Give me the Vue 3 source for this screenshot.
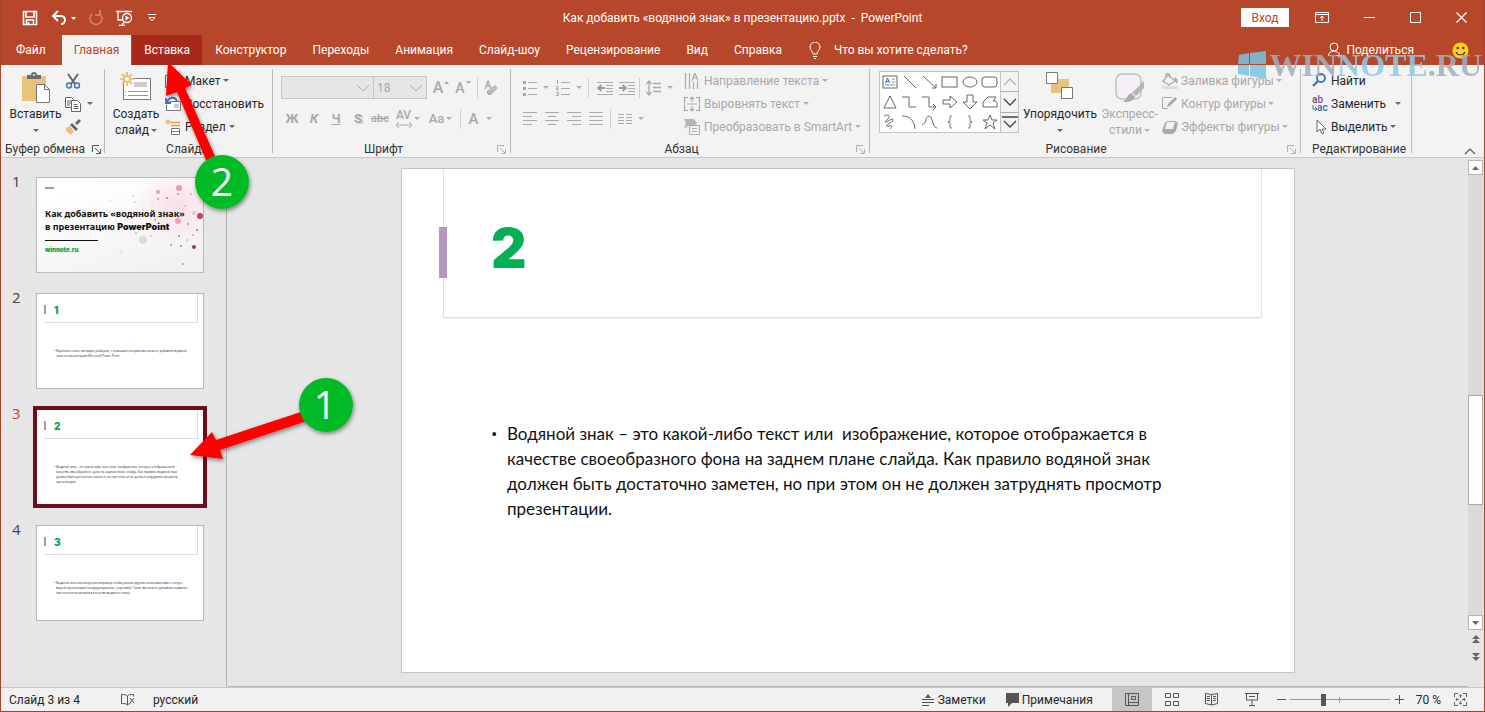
<script setup>
import { ref } from 'vue'

const tabs = ['Файл', 'Главная', 'Вставка', 'Конструктор', 'Переходы', 'Анимация', 'Слайд-шоу', 'Рецензирование', 'Вид', 'Справка']
const activeTab = ref('Главная')
const zoom = ref(33)

const slideText = [
  'Водяной знак – это какой-либо текст или \u00a0изображение, которое отображается в',
  'качестве своеобразного фона на заднем плане слайда. Как правило водяной знак',
  'должен быть достаточно заметен, но при этом он не должен затруднять просмотр',
  'презентации.'
]

const slides = [
  { n: 2, title: '1', lines: ['В данной статье наглядно разберём, с помощью которых вы сможете добавить водяной', 'знак на презентацию Microsoft Power Point'] },
  { n: 3, title: '2', lines: slideText, current: true },
  { n: 4, title: '3', lines: ['Водяной знак используется например чтобы указать другим пользователям о статусе', 'вашей презентации (конфиденциально, черновик). Также вы можете добавить название', 'или логотип компании в качестве водяного знака.'] }
]

const dots = [
  [142, 10, 3, '#e79bb5'], [121, 14, 2, '#e0a3b8'], [141, 16, 1, '#c77f98'], [154, 16, 1, '#d9a9b8'], [96, 18, 1, '#ddd0d4'],
  [121, 21, 1, '#c9889c'], [130, 20, 1, '#c77f98'], [98, 24, 1, '#ddd0d4'], [115, 25, 1, '#ddd0d4'], [148, 28, 1, '#ddbcc6'],
  [157, 35, 2, '#e3c3cd'], [163, 38, 3, '#b0476b'], [141, 43, 3, '#ee9fba'], [151, 46, 1, '#b98495'], [118, 42, 1, '#cf8fa3'],
  [160, 52, 1, '#a9687c'], [99, 55, 1, '#d8b4bf'], [114, 58, 1, '#e0c4cc'], [142, 58, 1, '#b77b8d'], [156, 57, 1, '#d5a4b2'],
  [106, 62, 4, '#ecd3d9'], [134, 67, 1, '#b58390'], [144, 68, 1, '#b58390'], [157, 69, 2, '#7f4356'], [84, 74, 2, '#f0e2e5'],
  [146, 86, 1, '#b9a0a7'], [73, 23, 1, '#eadfe2'], [70, 86, 1, '#eadfe2'], [127, 34, 1, '#d8b4bf'], [150, 62, 1, '#e0b4c2']
]

const shapes = [
  '<rect x="3" y="4" width="14" height="12"/><path d="M12 7h3M12 10h3M5 13h10" stroke="#8a8f98"/><path d="M5.500 11l2-5 2 5M6.500 9.500h2" stroke="#2b63a8"/>',
  '<path d="M4 4l12 12"/>',
  '<path d="M3 4l13 12M16 12v4h-4"/>',
  '<rect x="2" y="5" width="15" height="10"/>',
  '<ellipse cx="10" cy="10" rx="7" ry="5"/>',
  '<rect x="2" y="5" width="15" height="10" rx="3"/>',
  '<path d="M10 4l6 12H4z"/>',
  '<path d="M2 5h7v10h7"/>',
  '<path d="M2 5h7v10h7M13 12l3 3-3 3"/>',
  '<path d="M3 8h7V4l7 6-7 6v-4H3z"/>',
  '<path d="M7 3h6v7h4l-7 7-7-7h4z"/>',
  '<path d="M3 15V10l5-5h8l-3 4h2q3 0 2 6z"/>',
  '<path d="M4 4c5-3 7 1 3 4s-1 3 3 0 4 1 0 3-5 4-1 3 3 1 1 3"/>',
  '<path d="M2 4c8 0 12 4 13 13"/>',
  '<path d="M2 13c5-1 3-9 7-9s3 12 8 12"/>',
  '<path d="M12 4c-3 0-2 1-2 3s0 3-2 3c2 0 2 1 2 3s-1 3 2 3"/>',
  '<path d="M8 4c3 0 2 1 2 3s0 3 2 3c-2 0-2 1-2 3s1 3-2 3"/>',
  '<path d="M10 3l2 5h5l-4 3 2 6-5-4-5 4 2-6-4-3h5z"/>'
]

const aligns = [
  'M1 2h14M1 6h9M1 10h14M1 14h9',
  'M1 2h14M4 6h8M1 10h14M4 14h8',
  'M1 2h14M6 6h9M1 10h14M6 14h9',
  'M1 2h14M1 6h14M1 10h14M1 14h14'
]
</script>

<template>
  <div class="window">
    <header class="titlebar">
      <div class="quick">
        <button aria-label="Сохранить"><svg width="16" height="16" viewBox="0 0 16 16"><path d="M1.500 1.500h13v13h-13zM4 2v5h8V2M4.500 14v-4h7v4M6.500 12v2" fill="none" stroke="#fff" stroke-width="1.600" /></svg></button>
        <button aria-label="Отменить"><svg width="26" height="16" viewBox="0 0 26 16"><path d="M2 6h7c7 0 6 8 1 8M7 1L2 6l5 5" fill="none" stroke="#fff" stroke-width="2" /><path d="M20 7h5l-2.500 3z" fill="#fff" /></svg></button>
        <button aria-label="Повторить"><svg width="16" height="16" viewBox="0 0 16 16"><path d="M12 4a6 6 0 1 1-8 0M4 0v5H9" fill="none" stroke="#cd7c66" stroke-width="2" transform="translate(16 0) scale(-1 1)" /></svg></button>
        <button aria-label="Начать показ"><svg width="18" height="16" viewBox="0 0 18 16"><path d="M1 1.500h16M3 2v8h5M7 15l2-3M4 15.500h6" fill="none" stroke="#fff" stroke-width="1.300" /><circle cx="12" cy="8" r="4.500" fill="none" stroke="#fff" stroke-width="1.300" /><path d="M10.500 5.500v5l4-2.500z" fill="#fff" /></svg></button>
        <button aria-label="Настройка панели"><svg width="8" height="8" viewBox="0 0 8 8"><path d="M0 .5h8M1 3.500h6L4 7z" fill="none" stroke="#fff" /></svg></button>
      </div>
      <h1 class="doc">Как добавить «водяной знак» в презентацию.pptx&nbsp; -&nbsp; PowerPoint</h1>
      <div class="sys">
        <button class="login">Вход</button>
        <button aria-label="Параметры ленты"><svg width="14" height="12" viewBox="0 0 14 12"><path d="M.5.500h13v10H.5zM.5 2.500h13M7 9V4M5 6l2-2 2 2" fill="none" stroke="#fff" /></svg></button>
        <button aria-label="Свернуть"><svg width="11" height="11" viewBox="0 0 11 11"><path d="M0 5.500h11" stroke="#fff" /></svg></button>
        <button aria-label="Развернуть"><svg width="11" height="11" viewBox="0 0 11 11"><path d="M.5.500h10v10H.5z" fill="none" stroke="#fff" /></svg></button>
        <button aria-label="Закрыть"><svg width="11" height="11" viewBox="0 0 11 11"><path d="M.5.500l10 10M10.500.500l-10 10" stroke="#fff" stroke-width="1.200" /></svg></button>
      </div>
    </header>

    <nav class="tabs">
      <button v-for="t in tabs" :key="t" :class="{ active: t === activeTab, hover: t === 'Вставка' }" @click="activeTab = t">{{ t }}</button>
      <label class="tell">
        <svg width="12" height="17" viewBox="0 0 12 17"><path d="M4 12c0-3-3-3.500-3-7a5 5 0 0 1 10 0c0 3.500-3 4-3 7zM4 14.500h4M5 16.500h2" fill="none" stroke="#fff" /></svg>
        <input type="text" placeholder="Что вы хотите сделать?" aria-label="Что вы хотите сделать?">
      </label>
      <button class="share"><svg width="14" height="16" viewBox="0 0 14 16"><circle cx="6" cy="5" r="4" fill="none" stroke="#fff" /><path d="M.5 14c0-3 2-5 5.500-5 2 0 3 1 4 2M8 13.500h6M11 10.500v5" fill="none" stroke="#fff" /></svg>Поделиться</button>
      <button class="smile" aria-label="Отзыв"><svg width="17" height="17" viewBox="0 0 17 17"><circle cx="8.500" cy="8.500" r="8" fill="#fdd017" /><circle cx="5.700" cy="6" r="1.200" fill="#333" /><circle cx="11.300" cy="6" r="1.200" fill="#333" /><path d="M4 10c2 4 7 4 9 0" fill="none" stroke="#333" stroke-width="1.200" /></svg></button>
    </nav>

    <section class="ribbon">
      <div class="group g-clip">
        <div class="body">
          <button class="big">
            <svg width="30" height="32" viewBox="0 0 30 32"><path d="M1 4h24v25H1z" fill="#e9c27c" /><path d="M6 7V3h4a3 3 0 0 1 6 0h4v4z" fill="#6b6b6b" /><circle cx="13" cy="3" r="1" fill="#f3f3f3" /><path d="M15.500 12.500h8l5 5v13h-13z" fill="#fff" stroke="#777" /><path d="M23.500 12.500v5h5" fill="none" stroke="#777" /></svg>
            <span>Вставить</span><i class="caret"></i>
          </button>
          <div class="col">
            <button aria-label="Вырезать"><svg width="16" height="16" viewBox="0 0 16 16"><path d="M3 1l7 10M13 1L6 11" stroke="#666" stroke-width="2" /><circle cx="4" cy="12.500" r="2.500" fill="none" stroke="#3b73b9" stroke-width="1.400" /><circle cx="12" cy="12.500" r="2.500" fill="none" stroke="#3b73b9" stroke-width="1.400" /></svg></button>
            <button aria-label="Копировать"><svg width="16" height="16" viewBox="0 0 16 16" fill="#fff" stroke="#666"><path d="M.5 1.500h6l2 2v8h-8zM2 5h4M2 7h4M2 9h3" /><path d="M6.500 4.500h6l3 3v8h-9zM8.500 8.500h4M8.500 10.500h5M8.500 12.500h5" /></svg><i class="caret wide"></i></button>
            <button aria-label="Формат по образцу"><svg width="16" height="16" viewBox="0 0 16 16"><path d="M1 9l4-2 4 5-3 4-5-4z" fill="#e9c27c" /><path d="M5 6l2-2 6 6-2 2zM10 4l4-4 2 2-4 4z" fill="#666" /></svg></button>
          </div>
        </div>
        <footer><span>Буфер обмена</span><button class="launch dark" aria-label="Параметры: Буфер обмена"><svg width="9" height="9" viewBox="0 0 9 9"><path d="M.5 7V.5H7M3 3l5 5M8.500 4v4.500H4" /></svg></button></footer>
      </div>

      <div class="group g-slides">
        <div class="body">
          <button class="big">
            <svg width="32" height="32" viewBox="0 0 32 32"><path d="M3.500 6.500h27v21h-27z" fill="#fff" stroke="#777" /><path d="M14 10h13v5H14z" fill="#ccc" /><path d="M8 19.500h20M8 23.500h20M5 19.500h1M5 23.500h1" stroke="#999" /><path d="M7 0v14M0 7h14M2 2l10 10M12 2L2 12" stroke="#e9c27c" stroke-width="2" /><circle cx="7" cy="7" r="3" fill="#fff" stroke="#e9c27c" stroke-width="2" /></svg>
            <span>Создать</span><span>слайд<i class="caret"></i></span>
          </button>
          <div class="col">
            <button><svg width="16" height="16" viewBox="0 0 16 16" fill="#fff" stroke="#666"><path d="M.5 2.500h15v12H.5zM3 5.500h10M3 8.500h4v4H3zM9 8.500h4v4H9z" /></svg>Макет<i class="caret"></i></button>
            <button><svg width="16" height="16" viewBox="0 0 16 16"><path d="M4.500 5.500h11v9H1.500v-6" fill="#fff" stroke="#777" /><path d="M9 8h5v4H9z" fill="#ccc" /><path d="M2 7c1-6 8-7 10-2M1 2v5h5" fill="none" stroke="#3b73b9" stroke-width="1.800" /></svg>Восстановить</button>
            <button><svg width="16" height="16" viewBox="0 0 16 16"><path d="M3 0v6M0 3h6M1 1l4 4M5 1L1 5" stroke="#e9b060" /><path d="M6 3.500h9M6 6.500h9" stroke="#df9a47" stroke-width="1.500" /><path d="M6.500 9.500h8v6h-8zM6.500 12.500h8" fill="#fff" stroke="#777" /></svg>Раздел<i class="caret"></i></button>
          </div>
        </div>
        <footer><span>Слайды</span></footer>
      </div>

      <div class="group g-font muted">
        <div class="body rows">
          <div class="row">
            <div class="combo face"><select aria-label="Шрифт"><option></option></select><svg width="14" height="8" viewBox="0 0 14 8"><path d="M1 1l6 6 6-6" /></svg></div>
            <div class="combo size"><select aria-label="Размер шрифта"><option>18</option></select><svg width="14" height="8" viewBox="0 0 14 8"><path d="M1 1l6 6 6-6" /></svg></div>
            <button class="tool grow" aria-label="Увеличить шрифт">A<svg width="5" height="3" viewBox="0 0 5 3"><path d="M0 3h5L2.500 0z" fill="#aaa" /></svg></button>
            <button class="tool shrink" aria-label="Уменьшить шрифт">A<svg width="5" height="3" viewBox="0 0 5 3"><path d="M0 0h5L2.500 3z" fill="#aaa" /></svg></button>
            <i class="sep"></i>
            <button class="tool" aria-label="Очистить формат"><svg width="16" height="16" viewBox="0 0 16 16"><path d="M1 9l3-8 3 8M2 6h4" fill="none" stroke="#aaa" stroke-width="1.400" /><path d="M11 5l3 3-7 7-4-4z" fill="#bbb" /><path d="M3 11l4 4H5l-2-2z" fill="#999" /></svg></button>
          </div>
          <div class="row low">
            <button class="tool"><b>Ж</b></button>
            <button class="tool"><b class="it">К</b></button>
            <button class="tool"><b class="un">Ч</b></button>
            <button class="tool"><b class="sh">S</b></button>
            <button class="tool abc"><s>abc</s></button>
            <button class="tool wide av"><span>AV<svg width="16" height="6" viewBox="0 0 16 6"><path d="M1 3h14M3 0L0 3l3 3M13 0l3 3-3 3" fill="none" stroke="#aaa" /></svg></span><i class="caret"></i></button>
            <button class="tool wide"><b class="md">Aa</b><i class="caret"></i></button>
            <i class="sep"></i>
            <button class="tool wide"><b class="lg">A</b><i class="caret color"></i></button>
          </div>
        </div>
        <footer><span>Шрифт</span><button class="launch" aria-label="Параметры: Шрифт"><svg width="9" height="9" viewBox="0 0 9 9"><path d="M.5 7V.5H7M3 3l5 5M8.500 4v4.500H4" /></svg></button></footer>
      </div>

      <div class="group g-para muted">
        <div class="body">
          <div class="rows">
            <div class="row">
              <button class="tool pair" aria-label="Маркеры"><svg width="16" height="16" viewBox="0 0 16 16"><path d="M6 2.500h9M6 8.500h9M6 14.500h9" stroke="#aaa" /><path d="M1 1h3v3H1zM1 7h3v3H1zM1 13h3v3H1z" fill="#aaa" /></svg><i class="caret"></i></button>
              <button class="tool pair" aria-label="Нумерация"><svg width="16" height="16" viewBox="0 0 16 16"><path d="M6 2.500h9M6 8.500h9M6 14.500h9M2.500 0v4M1 6.500h2v2H1.500v1.500H4M1 12.500h2.500v3H1M2 14h1" stroke="#aaa" fill="none" /></svg><i class="caret"></i></button>
              <i class="sep"></i>
              <button class="tool ind" aria-label="Уменьшить отступ"><svg width="16" height="16" viewBox="0 0 16 16"><path d="M0 2.500h16M9 5.500h7M9 8.500h7M9 11.500h7M0 14.500h16" stroke="#aaa" /><path d="M8 8H2M4.500 5L1 8l3.500 3" fill="none" stroke="#999" stroke-width="1.800" /></svg></button>
              <button class="tool ind" aria-label="Увеличить отступ"><svg width="16" height="16" viewBox="0 0 16 16"><path d="M0 2.500h16M9 5.500h7M9 8.500h7M9 11.500h7M0 14.500h16" stroke="#aaa" /><path d="M0 8h6M3.500 5L7 8l-3.500 3" fill="none" stroke="#999" stroke-width="1.800" /></svg></button>
              <i class="sep"></i>
              <button class="tool pair" aria-label="Интервал"><svg width="16" height="16" viewBox="0 0 16 16"><path d="M7 3.500h8M7 7.500h8M7 11.500h8M3 1v14M.5 4L3 1l2.500 3M.5 12L3 15l2.500-3" fill="none" stroke="#aaa" stroke-width="1.300" /></svg><i class="caret"></i></button>
            </div>
            <div class="row low">
              <button v-for="(a, i) in aligns" :key="i" class="tool" :aria-label="'Выравнивание ' + (i + 1)"><svg width="16" height="16" viewBox="0 0 16 16"><path :d="a" transform="translate(0 -.5)" stroke="#aaa" fill="none" /></svg></button>
              <i class="sep"></i>
              <button class="tool pair" aria-label="Колонки"><svg width="16" height="16" viewBox="0 0 16 16"><path d="M1 3.500h6M1 6.500h6M1 9.500h6M1 12.500h6M9 3.500h6M9 6.500h6M9 9.500h6M9 12.500h6" stroke="#aaa" /></svg><i class="caret"></i></button>
            </div>
          </div>
          <div class="col">
            <button><svg width="16" height="16" viewBox="0 0 16 16"><path d="M1.500 0v16M5.500 0v16M9.500 9v7M13.500 9v7M8 8l3-8 3 8M9 5h4" fill="none" stroke="#aaa" stroke-width="1.200" /></svg>Направление текста<i class="caret"></i></button>
            <button><svg width="16" height="16" viewBox="0 0 16 16"><path d="M4 1.500H.5v13H4M12 1.500h3.500v13H12M3 8h10M8 1v5M6 3l2-2 2 2M8 10v5M6 13l2 2 2-2" fill="none" stroke="#aaa" stroke-width="1.200" /></svg>Выровнять текст<i class="caret"></i></button>
            <button><svg width="16" height="16" viewBox="0 0 16 16"><path d="M0 0h10l3 4-3 3-6 0-4 3 2-6z" fill="#b5b5b5" /><path d="M5.500 6.500h10v9h-10zM8 9.500h5M8 12.500h5" fill="#f3f3f3" stroke="#aaa" /></svg>Преобразовать в SmartArt<i class="caret"></i></button>
          </div>
        </div>
        <footer><span>Абзац</span><button class="launch" aria-label="Параметры: Абзац"><svg width="9" height="9" viewBox="0 0 9 9"><path d="M.5 7V.5H7M3 3l5 5M8.500 4v4.500H4" /></svg></button></footer>
      </div>

      <div class="group g-draw">
        <div class="body">
          <div class="gallery">
            <div class="shapes">
              <button v-for="(s, i) in shapes" :key="i" :aria-label="'Фигура ' + (i + 1)"><svg width="20" height="20" viewBox="0 0 20 20" v-html="s"></svg></button>
            </div>
            <div class="spin">
              <button class="off" aria-label="Вверх"><svg width="14" height="8" viewBox="0 0 14 8"><path d="M1 7l6-6 6 6" /></svg></button>
              <button aria-label="Вниз"><svg width="14" height="8" viewBox="0 0 14 8"><path d="M1 1l6 6 6-6" /></svg></button>
              <button aria-label="Ещё"><svg width="16" height="12" viewBox="0 0 16 12"><path d="M0 1h16M2 5l6 6 6-6" /></svg></button>
            </div>
          </div>
          <button class="big arrange">
            <svg width="28" height="32" viewBox="0 0 28 32"><path d="M5 7h18v14H5z" fill="#e9c27c" /><path d="M.5.500h11v11H.5zM15.500 15.500h11v11h-11z" fill="#fff" stroke="#777" /></svg>
            <span>Упорядочить</span><i class="caret"></i>
          </button>
          <button class="big muted styles">
            <svg width="30" height="32" viewBox="0 0 30 32"><rect x="1" y="2" width="25" height="25" rx="6" fill="#f4f0f5" stroke="#c2bfc5" stroke-width="1.500" /><path d="M29 9v7l-8 8-4-3z" fill="#b5b5b5" /><path d="M16 21l4 4c-2 5-8 5-12 5 4-2 4-7 8-9z" fill="#aaa" /></svg>
            <span>Экспресс-</span><span>стили<i class="caret"></i></span>
          </button>
          <div class="col muted">
            <button><svg width="16" height="16" viewBox="0 0 16 16"><path d="M6 2l7 6-6 4-6-4zM4 4c-1-5 5-5 4 1" fill="none" stroke="#aaa" stroke-width="1.200" /><path d="M13 4c3 2 3 4 2 7l-3-4z" fill="#aaa" /><path d="M0 13h16v3H0z" fill="#ddd" /></svg>Заливка фигуры<i class="caret"></i></button>
            <button><svg width="16" height="16" viewBox="0 0 16 16"><path d="M10 1.500H.5v11h5" fill="none" stroke="#aaa" /><path d="M5 11l1-3 7-7 2 2-7 7z" fill="#aaa" /></svg>Контур фигуры<i class="caret"></i></button>
            <button><svg width="16" height="16" viewBox="0 0 16 16"><path d="M5 2h8l3 2-2 8-3 3H2l-2-3L3 4z" fill="#aaa" /><path d="M5 3h8l-2 7H3z" fill="#f3f3f3" /></svg>Эффекты фигуры<i class="caret"></i></button>
          </div>
        </div>
        <footer><span>Рисование</span><button class="launch" aria-label="Параметры: Рисование"><svg width="9" height="9" viewBox="0 0 9 9"><path d="M.5 7V.5H7M3 3l5 5M8.500 4v4.500H4" /></svg></button></footer>
      </div>

      <div class="group g-edit">
        <div class="body">
          <div class="col">
            <button><svg width="16" height="16" viewBox="0 0 16 16"><circle cx="9" cy="5" r="4" fill="none" stroke="#3b73b9" stroke-width="1.800" /><path d="M6 8l-5 5" stroke="#3b73b9" stroke-width="2.400" /></svg>Найти</button>
            <button><span class="replace" aria-hidden="true"><em>a<u>b</u></em><em class="ac"><svg width="5" height="6" viewBox="0 0 5 6"><path d="M1 0v4h4M3 2l2 2-2 2" fill="none" stroke="#3b73b9" /></svg>ac</em></span>Заменить<i class="caret far"></i></button>
            <button><svg width="16" height="16" viewBox="0 0 16 16"><path d="M5 1v12l3-3 2 5 2-1-2-4h4z" fill="#fff" stroke="#666" /></svg>Выделить<i class="caret"></i></button>
          </div>
        </div>
        <footer><span>Редактирование</span></footer>
      </div>
      <button class="collapse" aria-label="Свернуть ленту"><svg width="12" height="7" viewBox="0 0 12 7"><path d="M1 6l5-5 5 5" fill="none" stroke="#555" stroke-width="1.200" /></svg></button>
    </section>

    <main class="work">
      <aside class="thumbs">
        <div class="item">
          <span class="num">1</span>
          <div class="thumb cover">
            <svg viewBox="0 0 166 94"><defs><radialGradient id="haze"><stop offset="0" stop-color="#f9dfe8" /><stop offset="1" stop-color="#f9dfe8" stop-opacity="0" /></radialGradient><linearGradient id="mist" x1="0.400" y1="0" x2="1" y2="1"><stop offset="0" stop-color="#fff" /><stop offset="1" stop-color="#f1eff0" /></linearGradient></defs><rect width="166" height="94" fill="url(#mist)" /><ellipse cx="142" cy="28" rx="46" ry="38" fill="url(#haze)" /><circle v-for="(d, i) in dots" :key="i" :cx="d[0]" :cy="d[1]" :r="d[2]" :fill="d[3]" /></svg>
            <div class="cover-text"><i class="dash"></i><h2>Как добавить «водяной знак»<br>в презентацию <b>PowerPoint</b></h2><hr><p>winnote.ru</p></div>
          </div>
        </div>
        <div v-for="s in slides" :key="s.n" class="item" :class="{ current: s.current }">
          <span class="num">{{ s.n }}</span>
          <div class="thumb">
            <div class="t-head"><i></i><b>{{ s.title }}</b></div>
            <div class="t-body"><span>•</span><p><template v-for="l in s.lines" :key="l">{{ l }}<br></template></p></div>
          </div>
        </div>
      </aside>

      <section class="canvas">
        <article class="slide">
          <div class="s-head"><i></i><h2>2</h2></div>
          <ul><li><template v-for="l in slideText" :key="l">{{ l }}<br></template></li></ul>
        </article>
      </section>

      <div class="scroll">
        <button class="sb" aria-label="Прокрутить вверх"><svg width="7" height="4" viewBox="0 0 7 4"><path d="M0 4h7L3.500 0z" /></svg></button>
        <div class="track"><div class="knob"></div></div>
        <button class="sb" aria-label="Прокрутить вниз"><svg width="7" height="4" viewBox="0 0 7 4"><path d="M0 0h7L3.500 4z" /></svg></button>
        <button class="jump" aria-label="Предыдущий слайд"><svg width="8" height="9" viewBox="0 0 8 9"><path d="M0 4h8L4 0zM0 8h8L4 4z" /></svg></button>
        <button class="jump" aria-label="Следующий слайд"><svg width="8" height="9" viewBox="0 0 8 9"><path d="M0 0h8L4 4zM0 4h8L4 8z" /></svg></button>
      </div>
    </main>

    <footer class="status">
      <span class="count">Слайд 3 из 4</span>
      <button class="spell" aria-label="Орфография"><svg width="14" height="13" viewBox="0 0 14 13"><path d="M6.500 12V3C5 1.500 3 1.500.5 1.500v9c3 0 4.500 0 6 1.500 1-1 2-1.500 3-1.500M6.500 3c1-1.500 3-1.500 6-1.500v2M9 5l4 5M13 5l-4 5" fill="none" stroke="#555" /></svg></button>
      <button class="lang">русский</button>
      <button class="notes"><svg width="12" height="12" viewBox="0 0 12 12"><path d="M0 5.500h12M0 8.500h12M0 11.500h7" stroke="#555" /><path d="M3 4h6L6 0z" fill="#555" /></svg>Заметки</button>
      <button class="comments"><svg width="14" height="14" viewBox="0 0 14 14"><path d="M1 0h13v10H7l-4 4v-4H1z" fill="#555" /></svg>Примечания</button>
      <div class="views">
        <button class="on" aria-label="Обычный"><svg width="14" height="13" viewBox="0 0 14 13"><path d="M.5.500h13v12H.5zM3.500.500v12M3.500 9.500h10M6.500 3.500h4v3h-4z" /></svg></button>
        <button aria-label="Сортировщик"><svg width="14" height="13" viewBox="0 0 14 13"><path d="M.5.500h5v4h-5zM8.500.500h5v4h-5zM.5 8.500h5v4h-5zM8.500 8.500h5v4h-5z" /></svg></button>
        <button aria-label="Чтение"><svg width="14" height="13" viewBox="0 0 14 13"><path d="M6.500 12V1.500L.5.500v10zM6.500 1.500l6-1v10l-6 1.500M2 3.500h3M2 5.500h3M2 7.500h3M8 3.500h3M8 5.500h3M8 7.500h3" /></svg></button>
        <button aria-label="Показ слайдов"><svg width="14" height="13" viewBox="0 0 14 13"><path d="M0 .5h14M1.500 1v6h11V1M4 3.500h6M7 7v5M4 12.500h6" /></svg></button>
      </div>
      <button class="step" aria-label="Уменьшить"><svg width="9" height="9" viewBox="0 0 9 9"><path d="M0 4.500h9" stroke="#555" /></svg></button>
      <input v-model="zoom" class="zoom" type="range" min="0" max="100" aria-label="Масштаб">
      <button class="step" aria-label="Увеличить"><svg width="9" height="9" viewBox="0 0 9 9"><path d="M0 4.500h9M4.500 0v9" stroke="#555" /></svg></button>
      <button class="pct">70 %</button>
      <button class="fit" aria-label="Вписать слайд"><svg width="13" height="13" viewBox="0 0 13 13"><path d="M4 .5H.5V4M9 .5h3.500V4M4 12.500H.5V9M9 12.500h3.500V9M6.500 2v3M6.500 8v3M2 6.500h3M8 6.500h3M5 3l1.500-1L8 3M5 10l1.500 1L8 10M3 5L2 6.500 3 8M10 5l1 1.500L10 8" fill="none" stroke="#666" /></svg></button>
    </footer>

    <div class="brand">
      <svg width="29" height="28" viewBox="0 0 29 28"><path d="M1 4l10-2v11H0zM12 2l16-2v13H12zM0 14h11v11L0 23zM12 14h16v14l-16-3z" fill="#7cc4e4" /></svg>
      <span>WIN<b>NOTE</b>.RU</span>
    </div>

    <svg class="marks" width="360" height="480" viewBox="0 0 360 480">
      <defs><filter id="shade" x="-20%" y="-20%" width="150%" height="150%"><feDropShadow dx="1" dy="2" stdDeviation="2" flood-opacity=".45" /></filter></defs>
      <g filter="url(#shade)">
        <path d="M168 62l-2 34 11-4 32 75 9-4-33-75 7-3z" fill="#fe0000" />
        <path d="M190 455l22-23 4 8 88-29 3 10-87 29 3 9z" fill="#fe0000" />
        <circle cx="222" cy="182" r="27" fill="#03bb27" />
        <circle cx="326" cy="405" r="27" fill="#03bb27" />
      </g>
      <text x="222" y="196">2</text>
      <text x="325" y="419">1</text>
    </svg>
  </div>
</template>

<style>
html, body { margin: 0; }
</style>

<style scoped>
* { box-sizing: border-box; }
.window { position: relative; display: flex; flex-direction: column; min-height: 100vh; overflow: hidden; border: solid #a5442c; border-width: 0 1px 1px; background: #e6e6e6; color: #262626; font: 12px/16px Roboto, "Noto Sans", sans-serif; white-space: nowrap; }
button { display: inline-flex; align-items: center; justify-content: center; margin: 0; padding: 0; border: 0; background: none; color: inherit; font: inherit; white-space: nowrap; }
svg { display: block; flex: none; }
h1, h2, p, ul { margin: 0; padding: 0; font-weight: normal; }
.caret { flex: none; display: inline-block; border: 3px solid transparent; border-top-color: #666; border-bottom: 0; margin-left: 2px; vertical-align: middle; }
.muted { color: #a8a8a8; }
.muted .caret { border-top-color: #b0b0b0; }

.titlebar { display: grid; grid-template-columns: 1fr auto 1fr; align-items: center; height: 35px; background: #b7472a; color: #fff; }
.quick { display: flex; align-items: center; gap: 11px; padding-left: 21px; }
.quick button:nth-child(2) { margin-left: 2px; }
.quick button:nth-child(5) { margin-left: 4px; }
.doc { font-size: 12px; }
.sys { display: flex; justify-content: flex-end; align-items: center; padding-right: 17px; }
.sys button { margin-left: 35px; }
.sys button:nth-child(2) { margin-left: 26px; }
.sys .login { width: 48px; height: 19px; margin: 0; background: #fff; color: #b7472a; }

.tabs { display: flex; align-items: stretch; height: 30px; padding-left: 2px; background: #b7472a; color: #fff; }
.tabs > button { padding: 0 13px; }
.tabs > .active { margin-left: 3px; padding: 0 12px; background: #f3f3f3; color: #b7472a; }
.tabs > .hover { margin-left: 1px; padding: 0 12px; background: #a8291b; }
.tell { display: flex; align-items: center; gap: 13px; margin-left: 14px; }
.tell input { width: 150px; padding: 0; border: 0; outline: 0; background: none; color: #fff; font: inherit; }
.tell input::placeholder { color: #fff; opacity: 1; }
.tabs .share { margin-left: auto; gap: 4px; padding: 0; }
.tabs .smile { padding: 0 15px 0 38px; }

.ribbon { display: flex; height: 93px; padding-top: 4px; border-bottom: 1px solid #c8c8c8; background: #f3f3f3; }
.group { display: flex; flex-direction: column; flex: none; height: 84px; border-right: 1px solid #b9b9b9; }
.body { display: flex; flex: none; height: 70px; }
.group footer { position: relative; display: flex; flex: none; justify-content: center; align-items: center; height: 20px; color: #333; }
.launch { position: absolute; right: 4px; top: 6px; }
.launch svg { fill: none; stroke: #b0b0b0; }
.dark svg { stroke: #555; }
.big { flex-direction: column; justify-content: flex-start; height: 70px; padding-top: 3px; }
.big svg { margin-bottom: 2px; }
.big > .caret { margin: 7px 0 0; }
.col { display: flex; flex-direction: column; }
.col button { justify-content: flex-start; height: 23px; gap: 4px; }
.col .caret { margin-left: -1px; }
.col .wide { margin-left: 2px; }
.col .far { margin-left: 6px; }
.g-clip { width: 104px; }
.g-clip .big { width: 69px; }
.g-clip .col svg { margin-left: -5px; }
.g-clip footer { padding-right: 15px; }
.launch.dark { right: 3px; }
.g-slides { width: 168px; }
.g-slides .big { width: 62px; }
.g-slides .col svg { margin-left: -2px; }
.g-font { width: 238px; }
.g-font footer { padding-right: 16px; }
.rows { flex-direction: column; padding: 7px 0 0 8px; }
.row { display: flex; align-items: center; height: 23px; }
.low { margin-top: 8px; }
.combo { position: relative; height: 23px; border: 1px solid #c6c6c6; background: #e6e6e6; }
.combo select { width: 100%; height: 100%; padding: 0 3px; border: 0; outline: 0; appearance: none; background: none; color: #a8a8a8; font: inherit; }
.combo svg { position: absolute; right: 3px; top: 7px; fill: none; stroke: #aaa; pointer-events: none; }
.face { width: 93px; }
.size { width: 54px; margin-left: -1px; }
.tool { flex: none; width: 22px; height: 22px; }
.tool b { font-size: 13px; }
.tool .it { font-style: italic; }
.tool .un { text-decoration: underline; }
.tool .sh { text-shadow: 2px 1px 1px #ccc; }
.tool .md { font-weight: 500; }
.tool .lg { font-size: 15px; font-weight: 500; }
.grow { margin-left: 3px; font-size: 16px; font-weight: 500; }
.shrink { font-size: 14px; font-weight: 500; }
.grow svg, .shrink svg { margin: -10px 0 0 1px; }
.sep { flex: none; width: 1px; height: 20px; margin: 0 3px; background: #d0d0d0; }
.abc { font-size: 11px; font-weight: 500; }
.tool.wide { width: 33px; }
.av span { display: flex; flex-direction: column; align-items: center; line-height: 13px; font-weight: 500; }
.tool .color { margin-left: 8px; }
.pair { width: 33px; justify-content: flex-start; padding-left: 3px; }
.pair .caret { margin-left: 5px; }
.ind { padding-left: 3px; }
.g-para { width: 359px; }
.g-para .rows { width: 173px; }
.g-para footer { padding-right: 17px; }
.g-draw { width: 431px; }
.g-draw footer { padding-right: 18px; }
.gallery { display: flex; width: 140px; height: 62px; margin: 2px 0 0 9px; border: 1px solid #c3c3c3; background: #fff; }
.shapes { display: grid; grid-template-columns: repeat(6, 20px); grid-template-rows: repeat(3, 20px); flex: 1; }
.shapes svg { fill: none; stroke: #666; }
.spin { display: flex; flex-direction: column; width: 18px; border-left: 1px solid #c3c3c3; }
.spin button { flex: 1; background: #f3f3f3; border-top: 1px solid #b0b0b0; }
.spin button:first-child { border-top: 0; }
.spin svg { fill: none; stroke: #444; stroke-width: 1.300; }
.spin .off svg { stroke: #b5b5b5; }
.arrange { width: 80px; margin-left: 1px; }
.styles { width: 59px; }
.g-draw .col { margin-left: 3px; }
.g-draw .col button { gap: 3px; }
.g-edit { width: 111px; padding-left: 11px; }
.g-edit footer { justify-content: flex-start; }
.g-edit .col button { gap: 3px; }
.replace { display: flex; flex-direction: column; width: 16px; color: #555; font-size: 10px; line-height: 8px; }
.replace em { display: flex; align-items: center; height: 8px; font-style: normal; font-weight: 500; }
.replace u { color: #8a4fae; text-decoration: none; }
.replace .ac { color: #3b6ba5; }
.collapse { align-self: flex-end; margin: 0 8px 2px auto; }

.work { display: flex; flex: 1; min-height: 0; }
.thumbs { width: 226px; flex: none; padding: 15px 0 0 9px; border-right: 1px solid #b5b5b5; }
.item { display: flex; gap: 9px; height: 116px; }
.num { width: 17px; height: 24px; padding-left: 2px; color: #444; font: 15px/16px "Open Sans", sans-serif; }
.thumb { position: relative; width: 168px; height: 96px; margin-top: 4px; border: 1px solid #b9b9b9; background: #fff; color: #222; }
.current .num { color: #c2472d; }
.current .thumb { outline: 3px solid #6b0d1c; border-color: #6b0d1c; }
.cover > svg { position: absolute; width: 100%; height: 100%; }
.cover-text { position: relative; display: flex; flex-direction: column; align-items: flex-start; padding: 9px 0 0 8px; }
.dash { width: 9px; height: 2px; background: #b28fbf; }
.cover h2 { margin-top: 18px; color: #111; font: bold 9px/13px "Noto Sans", sans-serif; }
.cover h2 b { font-family: Inter, sans-serif; font-weight: 900; }
.cover hr { width: 53px; height: 1px; margin: 7px 0 0; border: 0; background: #111; }
.cover p { color: #00a651; font: 900 6px/8px Inter, sans-serif; margin-top: 5px; }
.t-head { display: flex; align-items: center; width: 154px; height: 29px; margin-left: 7px; border: solid #ddd; border-width: 0 1px 1px 0; }
.t-head i { width: 2px; height: 9px; background: #a995ae; margin-top: 3px; }
.t-head b { margin: 3px 0 0 8px; color: #00a65a; font: 900 10px/12px Inter, sans-serif; }
.t-body { display: flex; gap: 1px; padding: 26px 0 0 17px; font: 3px/5px "Open Sans", sans-serif; }

.canvas { display: flex; flex: 1; min-width: 0; justify-content: center; margin-left: 1px; padding: 10px 0 13px; border-bottom: 1px solid #b9b9b9; }
.slide { width: 894px; max-width: 100%; min-height: 505px; border: 1px solid #c3c3c3; background: #fff; }
.s-head { display: flex; height: 149px; margin: 0 32px 0 41px; border: solid #e0e0e0; border-width: 0 1px 1px; box-shadow: 0 1px 1px #f2f2f2; }
.s-head i { width: 8px; height: 51px; margin: 58px 0 0 -5px; background: #b697c1; }
.s-head h2 { margin: 47px 0 0 44px; color: #03b053; font: 900 55px/64px Inter, sans-serif; }
.slide ul { margin: 103px 0 0 90px; padding-left: 15px; color: #111; font: 17px/25px Lato, "Open Sans", sans-serif; list-style: none; }
.slide li::before { content: "•"; float: left; margin-left: -16px; font-family: "Open Sans", sans-serif; }

.scroll { display: flex; flex-direction: column; width: 15px; margin-right: 1px; padding-top: 2px; padding-bottom: 21px; background: #e6e6e6; }
.scroll svg { fill: #666; }
.sb { height: 15px; border: 1px solid #b5b5b5; background: #fff; }
.track { display: grid; grid-template-rows: 2fr 1fr 1fr; flex: 1; background: #dadada; }
.knob { grid-row: 2; border: 1px solid #aaa; background: #fff; }
.jump { height: 18px; }

.status { display: flex; align-items: center; height: 24px; padding: 0 17px 0 8px; border-top: 1px solid #c6c6c6; background: #f1f1f1; }
.spell { margin-left: 41px; }
.lang { margin-left: 18px; }
.notes { gap: 4px; margin-left: auto; }
.comments { gap: 3px; margin-left: 19px; }
.views { display: flex; align-self: stretch; margin-left: 19px; }
.views button { width: 40px; }
.views .on { background: #c6c6c6; }
.views svg { fill: none; stroke: #555; }
.step { margin-left: 5px; }
.zoom { width: 100px; height: 12px; margin: 0 0 0 4px; appearance: none; background: linear-gradient(#999, #999) center / 100% 1px no-repeat, linear-gradient(#999, #999) center / 1px 6px no-repeat; }
.zoom::-webkit-slider-thumb { appearance: none; width: 5px; height: 12px; background: #555; }
.pct { margin-left: 12px; }
.fit { margin-left: 13px; }

.brand { position: absolute; right: 2px; top: 48px; display: flex; align-items: center; gap: 3px; opacity: .85; pointer-events: none; }
.brand span { color: #a3aebb; font: bold 32px/34px "Liberation Serif", serif; }
.brand b { color: #8fcbe6; }
.marks { position: absolute; left: -1px; top: 0; pointer-events: none; }
.marks text { fill: #fff; font: 39px "Open Sans", sans-serif; text-anchor: middle; }
</style>
